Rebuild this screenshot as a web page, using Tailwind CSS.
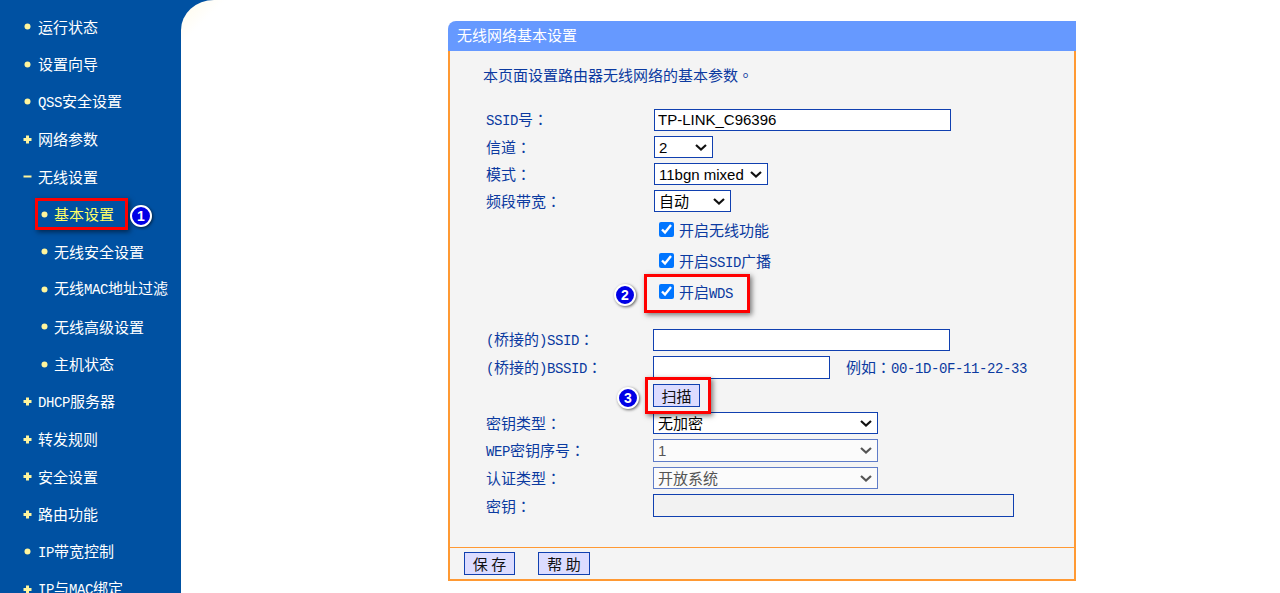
<!DOCTYPE html>
<html lang="en">
<head>
    <meta charset="UTF-8">
    <meta name="viewport" content="width=device-width, initial-scale=1.0">
    <title>无线网络基本设置</title>
    <script src="https://cdn.jsdelivr.net/npm/@tailwindcss/browser@4"></script>
</head>
<body class="bg-[#0051a2]">
<div class="relative flex w-[1280px] h-[593px] overflow-hidden text-[15px] leading-[22px] font-['Noto_Sans_CJK_SC',sans-serif]">

    <!-- left menu -->
    <nav class="w-[181px] shrink-0 pt-[8px] text-white">
        <div class="flex items-center h-[37.5px] pl-[23px] gap-[6px]"><svg class="w-[9px] h-[9px] shrink-0" viewBox="0 0 9 9"><circle cx="4.5" cy="4.5" r="3" fill="#fff59d"/></svg><span>运行状态</span></div>
        <div class="flex items-center h-[37.5px] pl-[23px] gap-[6px]"><svg class="w-[9px] h-[9px] shrink-0" viewBox="0 0 9 9"><circle cx="4.5" cy="4.5" r="3" fill="#fff59d"/></svg><span>设置向导</span></div>
        <div class="flex items-center h-[37.5px] pl-[23px] gap-[6px]"><svg class="w-[9px] h-[9px] shrink-0" viewBox="0 0 9 9"><circle cx="4.5" cy="4.5" r="3" fill="#fff59d"/></svg><span><span class="font-['Liberation_Mono'] text-[14px] tracking-[-0.4px]">QSS</span>安全设置</span></div>
        <div class="flex items-center h-[37.5px] pl-[23px] gap-[6px]"><svg class="w-[9px] h-[9px] shrink-0" viewBox="0 0 9 9"><path d="M4.5 0.5v8M0.5 4.5h8" stroke="#fff59d" stroke-width="3"/></svg><span>网络参数</span></div>
        <div class="flex items-center h-[37.5px] pl-[23px] gap-[6px]"><svg class="w-[9px] h-[9px] shrink-0" viewBox="0 0 9 9"><path d="M0.5 4.5h8" stroke="#fff59d" stroke-width="2"/></svg><span>无线设置</span></div>
        <div class="flex items-center h-[37.5px] pl-[40px] gap-[5px] text-[#ffff66]"><svg class="w-[9px] h-[9px] shrink-0" viewBox="0 0 9 9"><circle cx="4.5" cy="4.5" r="3" fill="#fff59d"/></svg><span>基本设置</span></div>
        <div class="flex items-center h-[37.5px] pl-[40px] gap-[5px]"><svg class="w-[9px] h-[9px] shrink-0" viewBox="0 0 9 9"><circle cx="4.5" cy="4.5" r="3" fill="#fff59d"/></svg><span>无线安全设置</span></div>
        <div class="flex items-center h-[37.5px] pl-[40px] gap-[5px] whitespace-nowrap"><svg class="w-[9px] h-[9px] shrink-0" viewBox="0 0 9 9"><circle cx="4.5" cy="4.5" r="3" fill="#fff59d"/></svg><span>无线<span class="font-['Liberation_Mono'] text-[14px] tracking-[-0.4px]">MAC</span>地址过滤</span></div>
        <div class="flex items-center h-[37.5px] pl-[40px] gap-[5px]"><svg class="w-[9px] h-[9px] shrink-0" viewBox="0 0 9 9"><circle cx="4.5" cy="4.5" r="3" fill="#fff59d"/></svg><span>无线高级设置</span></div>
        <div class="flex items-center h-[37.5px] pl-[40px] gap-[5px]"><svg class="w-[9px] h-[9px] shrink-0" viewBox="0 0 9 9"><circle cx="4.5" cy="4.5" r="3" fill="#fff59d"/></svg><span>主机状态</span></div>
        <div class="flex items-center h-[37.5px] pl-[23px] gap-[6px]"><svg class="w-[9px] h-[9px] shrink-0" viewBox="0 0 9 9"><path d="M4.5 0.5v8M0.5 4.5h8" stroke="#fff59d" stroke-width="3"/></svg><span><span class="font-['Liberation_Mono'] text-[14px] tracking-[-0.4px]">DHCP</span>服务器</span></div>
        <div class="flex items-center h-[37.5px] pl-[23px] gap-[6px]"><svg class="w-[9px] h-[9px] shrink-0" viewBox="0 0 9 9"><path d="M4.5 0.5v8M0.5 4.5h8" stroke="#fff59d" stroke-width="3"/></svg><span>转发规则</span></div>
        <div class="flex items-center h-[37.5px] pl-[23px] gap-[6px]"><svg class="w-[9px] h-[9px] shrink-0" viewBox="0 0 9 9"><path d="M4.5 0.5v8M0.5 4.5h8" stroke="#fff59d" stroke-width="3"/></svg><span>安全设置</span></div>
        <div class="flex items-center h-[37.5px] pl-[23px] gap-[6px]"><svg class="w-[9px] h-[9px] shrink-0" viewBox="0 0 9 9"><path d="M4.5 0.5v8M0.5 4.5h8" stroke="#fff59d" stroke-width="3"/></svg><span>路由功能</span></div>
        <div class="flex items-center h-[37.5px] pl-[23px] gap-[6px]"><svg class="w-[9px] h-[9px] shrink-0" viewBox="0 0 9 9"><circle cx="4.5" cy="4.5" r="3" fill="#fff59d"/></svg><span><span class="font-['Liberation_Mono'] text-[14px] tracking-[-0.4px]">IP</span>带宽控制</span></div>
        <div class="flex items-center h-[37.5px] pl-[23px] gap-[6px] whitespace-nowrap"><svg class="w-[9px] h-[9px] shrink-0" viewBox="0 0 9 9"><path d="M4.5 0.5v8M0.5 4.5h8" stroke="#fff59d" stroke-width="3"/></svg><span><span class="font-['Liberation_Mono'] text-[14px] tracking-[-0.4px]">IP</span>与<span class="font-['Liberation_Mono'] text-[14px] tracking-[-0.4px]">MAC</span>绑定</span></div>
    </nav>

    <!-- page -->
    <main class="flex-1 bg-white bg-[linear-gradient(135deg,#fffbea_0,#ffffff_32px)] rounded-tl-[33px_30px] pt-[21px] pl-[267px]">
        <div class="w-[628px]">
            <div class="h-[30px] bg-[#6699ff] rounded-tl-[8px] pl-[9px] leading-[27px] text-white">无线网络基本设置</div>
            <div class="h-[530px] bg-[#f4f4f4] border-x-2 border-b-2 border-[#ff9933] text-[#0b3aa0]">
                <p class="h-[22px] pt-[13px] box-content pl-[33px]">本页面设置路由器无线网络的基本参数<span class="font-['Noto_Sans_CJK_TC']">。</span></p>

                <div class="flex items-center h-[22px] mt-[23px] pl-[36px]"><label class="w-[168px]"><span class="font-['Liberation_Mono'] text-[14px] tracking-[-0.4px]">SSID</span>号<span class="font-['Noto_Sans_CJK_TC']">：</span></label><input type="text" value="TP-LINK_C96396" class="w-[297px] h-[22px] px-[3px] bg-white border border-[#1040b0] text-black text-[15px] font-['Liberation_Sans']"></div>
                <div class="flex items-center h-[22px] mt-[5px] pl-[36px]"><label class="w-[168px]">信道<span class="font-['Noto_Sans_CJK_TC']">：</span></label>
                    <span class="relative flex"><select class="appearance-none w-[59px] h-[22px] pl-[4px] bg-white border border-[#1040b0] text-black text-[15px] font-['Liberation_Sans']"><option>2</option></select><svg class="absolute right-[6px] top-[8px] w-[12px] h-[7px] pointer-events-none" viewBox="0 0 12 7" fill="none" stroke="#111" stroke-width="2.2"><path d="M1 1l5 4.5L11 1"/></svg></span></div>
                <div class="flex items-center h-[22px] mt-[5px] pl-[36px]"><label class="w-[168px]">模式<span class="font-['Noto_Sans_CJK_TC']">：</span></label>
                    <span class="relative flex"><select class="appearance-none w-[114px] h-[22px] pl-[4px] bg-white border border-[#1040b0] text-black text-[15px] font-['Liberation_Sans']"><option>11bgn mixed</option></select><svg class="absolute right-[6px] top-[8px] w-[12px] h-[7px] pointer-events-none" viewBox="0 0 12 7" fill="none" stroke="#111" stroke-width="2.2"><path d="M1 1l5 4.5L11 1"/></svg></span></div>
                <div class="flex items-center h-[22px] mt-[5px] pl-[36px]"><label class="w-[168px]">频段带宽<span class="font-['Noto_Sans_CJK_TC']">：</span></label>
                    <span class="relative flex"><select class="appearance-none w-[77px] h-[22px] pl-[4px] bg-white border border-[#1040b0] text-black text-[15px] font-['Liberation_Sans','Noto_Sans_CJK_SC']"><option>自动</option></select><svg class="absolute right-[6px] top-[8px] w-[12px] h-[7px] pointer-events-none" viewBox="0 0 12 7" fill="none" stroke="#111" stroke-width="2.2"><path d="M1 1l5 4.5L11 1"/></svg></span></div>

                <div class="flex items-center h-[22px] mt-[7px] pl-[209px] gap-[5px]"><input type="checkbox" checked class="w-[15px] h-[15px] m-0 -translate-y-[1px]"><span>开启无线功能</span></div>
                <div class="flex items-center h-[22px] mt-[10px] pl-[209px] gap-[5px]"><input type="checkbox" checked class="w-[15px] h-[15px] m-0 -translate-y-[2px]"><span>开启<span class="font-['Liberation_Mono'] text-[14px] tracking-[-0.4px]">SSID</span>广播</span></div>
                <div class="flex items-center h-[22px] mt-[9px] pl-[209px] gap-[5px]"><input type="checkbox" checked class="w-[15px] h-[15px] m-0 -translate-y-[2px]"><span>开启<span class="font-['Liberation_Mono'] text-[14px] tracking-[-0.4px]">WDS</span></span></div>

                <div class="flex items-center h-[22px] mt-[25px] pl-[36px]"><label class="w-[167px]"><span class="font-['Liberation_Mono'] text-[14px] tracking-[-0.4px]">(</span>桥接的<span class="font-['Liberation_Mono'] text-[14px] tracking-[-0.4px]">)SSID</span><span class="font-['Noto_Sans_CJK_TC']">：</span></label><input type="text" class="w-[297px] h-[22px] bg-white border border-[#1040b0]"></div>
                <div class="flex items-center h-[23px] mt-[5px] pl-[36px]"><label class="w-[167px]"><span class="font-['Liberation_Mono'] text-[14px] tracking-[-0.4px]">(</span>桥接的<span class="font-['Liberation_Mono'] text-[14px] tracking-[-0.4px]">)BSSID</span><span class="font-['Noto_Sans_CJK_TC']">：</span></label><input type="text" class="w-[177px] h-[23px] bg-white border border-[#1040b0]"><span class="ml-[16px]">例如<span class="font-['Noto_Sans_CJK_TC']">：</span><span class="font-['Liberation_Mono'] text-[14px] tracking-[-0.4px]">00-1D-0F-11-22-33</span></span></div>
                <div class="flex items-center h-[23px] mt-[5px] pl-[203px]"><button type="button" class="w-[47px] h-[23px] bg-[#dcdcff] border border-[#1040b0] text-[#111]">扫描</button></div>
                <div class="flex items-center h-[22px] mt-[5px] pl-[36px]"><label class="w-[167px]">密钥类型<span class="font-['Noto_Sans_CJK_TC']">：</span></label>
                    <span class="relative flex"><select class="appearance-none w-[225px] h-[22px] pl-[4px] bg-white border border-[#1040b0] text-black text-[15px] font-['Liberation_Sans','Noto_Sans_CJK_SC']"><option>无加密</option></select><svg class="absolute right-[6px] top-[8px] w-[12px] h-[7px] pointer-events-none" viewBox="0 0 12 7" fill="none" stroke="#111" stroke-width="2.2"><path d="M1 1l5 4.5L11 1"/></svg></span></div>
                <div class="flex items-center h-[23px] mt-[5px] pl-[36px]"><label class="w-[167px]"><span class="font-['Liberation_Mono'] text-[14px] tracking-[-0.4px]">WEP</span>密钥序号<span class="font-['Noto_Sans_CJK_TC']">：</span></label>
                    <span class="relative flex"><select disabled class="appearance-none w-[225px] h-[23px] pl-[4px] bg-[#fbfbfb] border border-[#5f7cc8] text-[#555] text-[15px] font-['Liberation_Sans']"><option>1</option></select><svg class="absolute right-[6px] top-[8px] w-[12px] h-[7px] pointer-events-none" viewBox="0 0 12 7" fill="none" stroke="#555" stroke-width="2.2"><path d="M1 1l5 4.5L11 1"/></svg></span></div>
                <div class="flex items-center h-[22px] mt-[5px] pl-[36px]"><label class="w-[167px]">认证类型<span class="font-['Noto_Sans_CJK_TC']">：</span></label>
                    <span class="relative flex"><select disabled class="appearance-none w-[225px] h-[22px] pl-[4px] bg-[#fbfbfb] border border-[#5f7cc8] text-[#555] text-[15px] font-['Liberation_Sans','Noto_Sans_CJK_SC']"><option>开放系统</option></select><svg class="absolute right-[6px] top-[8px] w-[12px] h-[7px] pointer-events-none" viewBox="0 0 12 7" fill="none" stroke="#555" stroke-width="2.2"><path d="M1 1l5 4.5L11 1"/></svg></span></div>
                <div class="flex items-center h-[23px] mt-[5px] pl-[36px]"><label class="w-[167px]">密钥<span class="font-['Noto_Sans_CJK_TC']">：</span></label><input type="text" disabled class="w-[361px] h-[23px] bg-[#f2f2f2] border border-[#1040b0]"></div>

                <div class="flex items-center h-[32px] mt-[30px] border-t border-[#ff9933] pl-[14px]">
                    <button type="button" class="w-[51px] h-[23px] bg-[#dcdcff] border border-[#1040b0] text-[#111]">保 存</button>
                    <button type="button" class="w-[52px] h-[23px] ml-[23px] bg-[#dcdcff] border border-[#1040b0] text-[#111]">帮 助</button>
                </div>
            </div>
        </div>
    </main>

    <!-- red marks and numbers drawn on top of the screenshot -->
    <div class="absolute left-[35px] top-[198px] w-[93px] h-[32px] border-[3px] border-[#ff0000] shadow-[2px_2px_5px_rgba(0,0,0,0.5)]"></div>
    <div class="absolute left-[644px] top-[274px] w-[106px] h-[39px] border-[3px] border-[#ff0000] shadow-[2px_2px_5px_rgba(0,0,0,0.5)]"></div>
    <div class="absolute left-[645px] top-[377px] w-[66px] h-[37px] border-[3px] border-[#ff0000] shadow-[2px_2px_5px_rgba(0,0,0,0.5)]"></div>
    <div class="absolute left-[130px] top-[205px] w-[22px] h-[22px] rounded-full bg-[#0000e6] border-2 border-white shadow-[1px_1px_3px_rgba(0,0,0,0.6)] flex items-center justify-center text-white text-[14px] leading-none font-bold font-['Liberation_Sans']">1</div>
    <div class="absolute left-[614px] top-[284px] w-[22px] h-[22px] rounded-full bg-[#0000e6] border-2 border-white shadow-[1px_1px_3px_rgba(0,0,0,0.6)] flex items-center justify-center text-white text-[14px] leading-none font-bold font-['Liberation_Sans']">2</div>
    <div class="absolute left-[617px] top-[387px] w-[22px] h-[22px] rounded-full bg-[#0000e6] border-2 border-white shadow-[1px_1px_3px_rgba(0,0,0,0.6)] flex items-center justify-center text-white text-[14px] leading-none font-bold font-['Liberation_Sans']">3</div>
</div>
</body>
</html>
